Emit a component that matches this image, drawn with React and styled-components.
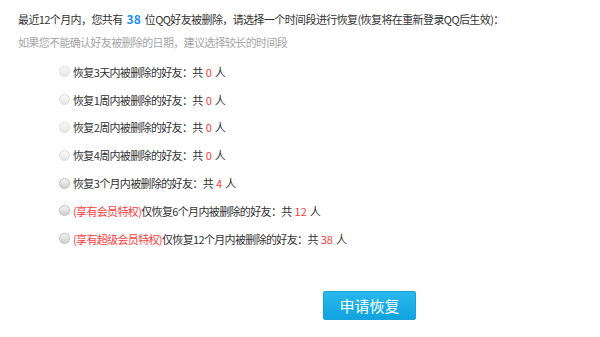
import React from "react";
import styled, { createGlobalStyle } from "styled-components";

const Global = createGlobalStyle`
  html, body { margin: 0; padding: 0; background: #fff; }
  body { font-family: "Noto Sans CJK SC", "Liberation Sans", sans-serif; }
`;

const Page = styled.div`
  width: 600px;
  height: 337px;
  box-sizing: border-box;
  padding: 11px 18px 0;
  color: #333;
  font-size: 11px;
  letter-spacing: -0.65px;
`;

const Title = styled.div`
  line-height: 16px;
  white-space: nowrap;
  letter-spacing: -0.6px;
`;

const Num = styled.span`
  color: ${(p) => (p.$blue ? "#1e8ff2" : "#ff3b3b")};
  font-weight: ${(p) => (p.$blue ? 700 : 400)};
  font-size: ${(p) => (p.$blue ? "12px" : "11px")};
  letter-spacing: 0;
  margin: 0 ${(p) => (p.$blue ? "4px" : "3px")};
`;

const Hint = styled.div`
  margin-top: 7px;
  line-height: 16px;
  color: #a6a6a6;
`;

const List = styled.div`
  margin-top: 8px;
  padding-left: 41px;
  display: flex;
  flex-direction: column;
`;

const Row = styled.label`
  display: flex;
  align-items: center;
  height: 27.8px;
  gap: 3px;
`;

const Radio = styled.span`
  width: 9px;
  height: 9px;
  border-radius: 50%;
  border: 1px solid ${(p) => (p.$disabled ? "#dcdcdc" : "#bdbdbd")};
  background: ${(p) =>
    p.$disabled
      ? "linear-gradient(#fafafa, #e6e6e6)"
      : "linear-gradient(#f4f4f4, #cfcfcf)"};
  flex: none;
`;

const Priv = styled.span`
  color: #ff3b3b;
`;

const ButtonWrap = styled.div`
  margin-top: 38px;
  padding-left: 305px;
`;

const Button = styled.button`
  width: 93px;
  height: 29px;
  border: 1px solid #1aa2d8;
  border-radius: 2px;
  background: linear-gradient(#2ab8ec, #11a3de);
  color: #fff;
  font-family: "Noto Sans CJK SC", sans-serif;
  font-size: 15px;
  padding: 0;
  cursor: pointer;
`;

const rows = [
  { label: "恢复3天内被删除的好友：共", n: 0, disabled: true },
  { label: "恢复1周内被删除的好友：共", n: 0, disabled: true },
  { label: "恢复2周内被删除的好友：共", n: 0, disabled: true },
  { label: "恢复4周内被删除的好友：共", n: 0, disabled: true },
  { label: "恢复3个月内被删除的好友：共", n: 4 },
  { priv: "(享有会员特权)", label: "仅恢复6个月内被删除的好友：共", n: 12 },
  { priv: "(享有超级会员特权)", label: "仅恢复12个月内被删除的好友：共", n: 38 },
];

export default function App() {
  return (
    <>
      <Global />
      <Page>
        <Title>
          最近12个月内，您共有<Num $blue>38</Num>位QQ好友被删除，请选择一个时间段进行恢复(恢复将在重新登录QQ后生效)：
        </Title>
        <Hint>如果您不能确认好友被删除的日期，建议选择较长的时间段</Hint>
        <List>
          {rows.map((r, i) => (
            <Row key={i}>
              <Radio $disabled={r.disabled} />
              <span>
                {r.priv && <Priv>{r.priv}</Priv>}
                {r.label}
                <Num>{r.n}</Num>人
              </span>
            </Row>
          ))}
        </List>
        <ButtonWrap>
          <Button>申请恢复</Button>
        </ButtonWrap>
      </Page>
    </>
  );
}
